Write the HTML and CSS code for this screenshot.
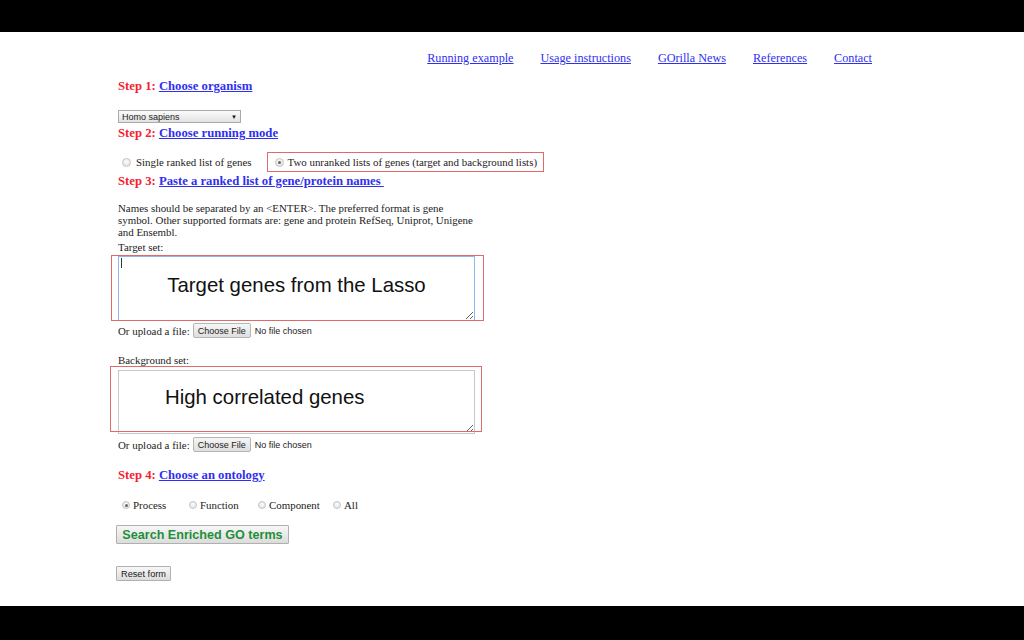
FILE: index.html
```html
<!DOCTYPE html>
<html lang="en">
<head>
<meta charset="utf-8">
<title>GOrilla</title>
<link rel="stylesheet" href="styles.css">
</head>
<body>
<div class="bar bar-top"></div>
<main class="page">
  <nav class="nav">
    <a href="#">Running example</a>
    <a href="#">Usage instructions</a>
    <a href="#">GOrilla News</a>
    <a href="#">References</a>
    <a href="#">Contact</a>
  </nav>
  <form class="form">
    <h2 class="step step1"><span>Step 1:</span> <a href="#">Choose organism</a></h2>
    <div class="select"><span>Homo sapiens</span><span class="arrow">▼</span></div>

    <h2 class="step step2"><span>Step 2:</span> <a href="#">Choose running mode</a></h2>
    <div class="mode-row">
      <label class="mode-opt"><span class="radio"></span>Single ranked list of genes</label>
      <label class="mode-opt boxed"><span class="radio checked"></span>Two unranked lists of genes (target and background lists)</label>
    </div>

    <h2 class="step step3"><span>Step 3:</span> <a href="#">Paste a ranked list of gene/protein names&nbsp;</a></h2>
    <p class="hint">Names should be separated by an &lt;ENTER&gt;. The preferred format is gene symbol. Other supported formats are: gene and protein RefSeq, Uniprot, Unigene and Ensembl.</p>

    <div class="set-label">Target set:</div>
    <div class="area-wrap area-target">
      <textarea class="area focused"></textarea>
      <span class="caret"></span>
      <span class="overlay-text overlay-target">Target genes from the Lasso</span>
      <span class="annot annot-target"></span>
    </div>
    <div class="upload upload1">Or upload a file:<span class="file-btn">Choose File</span><span class="nofile">No file chosen</span></div>

    <div class="set-label bg-label">Background set:</div>
    <div class="area-wrap area-bg">
      <textarea class="area"></textarea>
      <span class="overlay-text overlay-bg">High correlated genes</span>
      <span class="annot annot-bg"></span>
    </div>
    <div class="upload upload2">Or upload a file:<span class="file-btn">Choose File</span><span class="nofile">No file chosen</span></div>

    <h2 class="step step4"><span>Step 4:</span> <a href="#">Choose an ontology</a></h2>
    <div class="onto-row">
      <label class="onto-opt"><span class="radio small checked"></span>Process</label>
      <label class="onto-opt"><span class="radio small"></span>Function</label>
      <label class="onto-opt"><span class="radio small"></span>Component</label>
      <label class="onto-opt"><span class="radio small"></span>All</label>
    </div>

    <div class="search-btn">Search Enriched GO terms</div>
    <div class="reset-btn">Reset form</div>
  </form>
</main>
<div class="bar bar-bottom"></div>
</body>
</html>
```
FILE: styles.css
```css
html, body {
  margin: 0;
  padding: 0;
  background: #000;
}
body {
  width: 1024px;
  height: 640px;
  overflow: hidden;
  font-family: "Liberation Serif", "Times New Roman", serif;
  color: #222;
}
.bar {
  background: #000;
}
.bar-top {
  height: 32px;
}
.bar-bottom {
  height: 34px;
}
.page {
  height: 574px;
  box-sizing: border-box;
  padding-top: 19px;
  background: #fff;
  overflow: hidden;
}
.nav {
  display: flex;
  justify-content: flex-end;
  gap: 27px;
  padding-right: 152px;
  font-size: 12.2px;
  line-height: 14px;
}
.nav a {
  color: #2f2ff0;
  text-decoration: underline;
}
.form {
  padding-left: 118px;
}
.step {
  margin: 0;
  font-size: 12.7px;
  line-height: 14px;
  font-weight: bold;
  color: #f52230;
}
.step a {
  color: #2f2ff0;
  text-decoration: underline;
}
.step1 { margin-top: 14px; }
.step2 { margin-top: 3px; }
.step3 { margin-top: 2px; }
.step4 { margin-top: 16px; }

.select {
  margin-top: 17px;
  width: 123px;
  height: 13px;
  box-sizing: border-box;
  border: 1px solid #a9a9a9;
  background: linear-gradient(#fbfbfb, #e2e2e2);
  display: flex;
  justify-content: space-between;
  align-items: center;
  padding: 0 3px 0 3px;
  font-family: "Liberation Sans", Arial, sans-serif;
  font-size: 9px;
  color: #222;
}
.select .arrow {
  font-size: 6px;
  color: #111;
}

.radio {
  display: inline-block;
  box-sizing: border-box;
  width: 9px;
  height: 9px;
  border-radius: 50%;
  border: 1px solid #c4c4c4;
  background: radial-gradient(circle at 50% 40%, #fdfdfd, #dcdcdc);
  position: relative;
  flex: none;
}
.radio.checked::after {
  content: "";
  position: absolute;
  left: 2px;
  top: 2px;
  width: 3px;
  height: 3px;
  border-radius: 50%;
  background: #666;
}
.radio.small {
  width: 8px;
  height: 8px;
}
.radio.small.checked::after {
  left: 1.5px;
  top: 1.5px;
}

.mode-row {
  margin-top: 12px;
  height: 20px;
  display: flex;
  align-items: center;
  font-size: 10.9px;
}
.mode-opt {
  display: flex;
  align-items: center;
  gap: 5px;
  padding-left: 4px;
}
.mode-opt.boxed {
  margin-left: 15px;
  height: 20px;
  box-sizing: border-box;
  border: 1px solid #e06a6a;
  padding: 0 6px 0 7px;
  gap: 4px;
}

.hint {
  margin: 14px 0 0;
  width: 358px;
  font-size: 10.9px;
  line-height: 12px;
}
.set-label {
  margin-top: 3px;
  font-size: 10.9px;
  line-height: 12px;
}
.bg-label {
  margin-top: 16px;
}

.area-wrap {
  position: relative;
  width: 357px;
  margin-top: 3px;
}
.area-target {
  height: 65px;
}
.area-bg {
  height: 64px;
  margin-top: 4px;
}
.area {
  display: block;
  box-sizing: border-box;
  width: 357px;
  height: 100%;
  margin: 0;
  border: 1px solid #c8c8c8;
  background: #fff;
  outline: none;
}
.area.focused {
  border-color: #8fb6ea;
}
.caret {
  position: absolute;
  left: 3px;
  top: 2px;
  width: 1px;
  height: 10px;
  background: #333;
}
.overlay-text {
  position: absolute;
  font-family: "Liberation Sans", Arial, sans-serif;
  font-size: 20.4px;
  line-height: 24px;
  color: #111;
  white-space: nowrap;
}
.overlay-target {
  left: 0;
  right: 0;
  top: 17px;
  text-align: center;
}
.overlay-bg {
  left: 47px;
  top: 15px;
}
.annot {
  position: absolute;
  box-sizing: border-box;
  border: 1px solid #e06a6a;
  pointer-events: none;
}
.annot-target {
  left: -7px;
  top: -1px;
  width: 373px;
  height: 66px;
}
.annot-bg {
  left: -8px;
  top: -4px;
  width: 372px;
  height: 66px;
}

.upload {
  display: flex;
  align-items: center;
  height: 15px;
  font-size: 10.9px;
}
.upload1 { margin-top: 2px; }
.upload2 { margin-top: 3px; }
.file-btn {
  margin-left: 3px;
  box-sizing: border-box;
  height: 15px;
  width: 58px;
  display: flex;
  align-items: center;
  justify-content: center;
  border: 1px solid #b5b5b5;
  border-radius: 2px;
  background: linear-gradient(#f6f6f6, #dedede);
  font-family: "Liberation Sans", Arial, sans-serif;
  font-size: 9px;
  color: #222;
}
.nofile {
  margin-left: 4px;
  font-family: "Liberation Sans", Arial, sans-serif;
  font-size: 9px;
  color: #222;
}

.onto-row {
  margin-top: 16px;
  height: 14px;
  display: grid;
  grid-template-columns: 67px 69px 75px auto;
  align-items: center;
  padding-left: 4px;
  font-size: 10.9px;
}
.onto-opt {
  display: flex;
  align-items: center;
  gap: 3px;
}

.search-btn {
  margin-top: 13px;
  margin-left: -2px;
  width: 173px;
  height: 19px;
  box-sizing: border-box;
  display: flex;
  align-items: center;
  justify-content: center;
  border: 1px solid #b0b0b0;
  border-radius: 1px;
  background: linear-gradient(#f7f7f7, #dcdcdc);
  font-family: "Liberation Sans", Arial, sans-serif;
  font-weight: bold;
  font-size: 12.6px;
  color: #1f8f3a;
}
.reset-btn {
  margin-top: 22px;
  margin-left: -2px;
  width: 55px;
  height: 15px;
  box-sizing: border-box;
  display: flex;
  align-items: center;
  justify-content: center;
  border: 1px solid #b0b0b0;
  border-radius: 1px;
  background: linear-gradient(#f7f7f7, #dcdcdc);
  font-family: "Liberation Sans", Arial, sans-serif;
  font-size: 9.2px;
  color: #222;
}
```
